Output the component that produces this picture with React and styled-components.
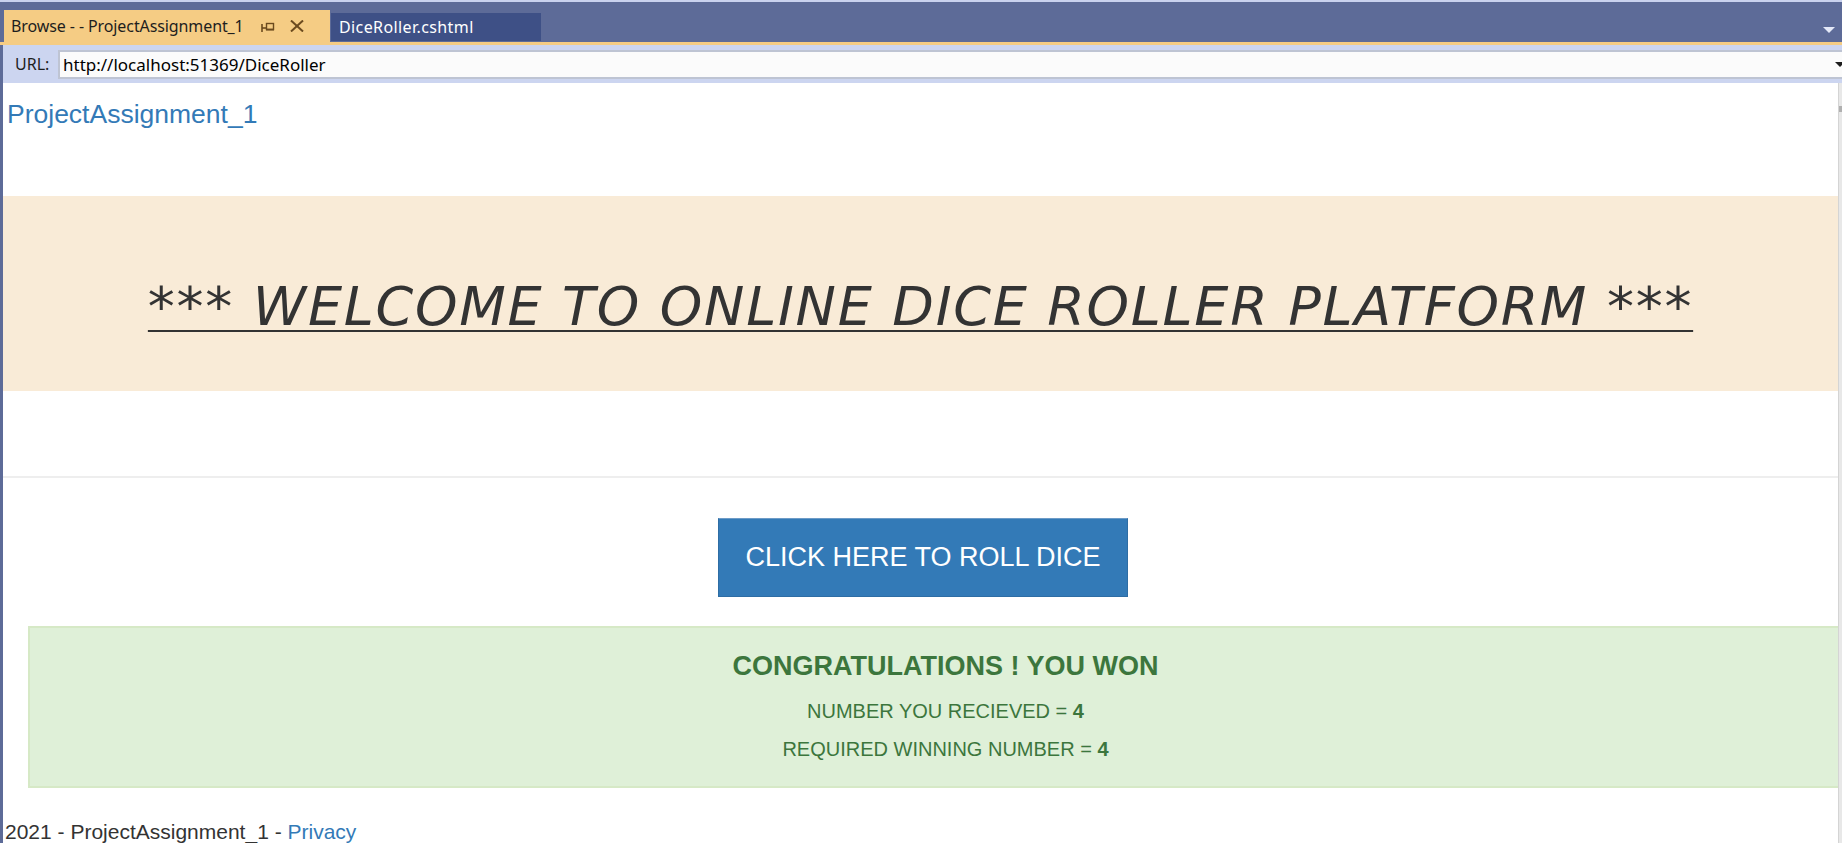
import React from 'react';
import styled, { createGlobalStyle } from 'styled-components';

const GlobalStyle = createGlobalStyle`
  html, body {
    margin: 0;
    padding: 0;
    overflow: hidden;
  }
  * {
    box-sizing: border-box;
  }
`;

const PinIcon = () => (
  <svg width="14" height="11" viewBox="0 0 14 11" fill="none" stroke="#6b4a1e">
    <line x1="1" y1="2" x2="1" y2="10" strokeWidth="1.6" />
    <line x1="1" y1="6" x2="5" y2="6" strokeWidth="1.6" />
    <rect x="5.5" y="1.5" width="7" height="6" strokeWidth="1.4" />
    <line x1="5" y1="7.6" x2="13" y2="7.6" strokeWidth="1.8" />
  </svg>
);

const CloseIcon = () => (
  <svg width="14" height="12" viewBox="0 0 14 12" stroke="#6b4a1e" strokeWidth="2">
    <line x1="1" y1="0.5" x2="13" y2="11.5" />
    <line x1="13" y1="0.5" x2="1" y2="11.5" />
  </svg>
);

const App = () => {
  return (
    <>
      <GlobalStyle />
      <Window>
        <TitleBar>
          <Tabs>
            <Tab $active>
              <TabLabel $active>Browse - - ProjectAssignment_1</TabLabel>
              <TabIcons>
                <PinIcon />
                <CloseIcon />
              </TabIcons>
            </Tab>
            <Tab>
              <TabLabel>DiceRoller.cshtml</TabLabel>
            </Tab>
          </Tabs>
          <MenuArrow />
        </TitleBar>
        <AccentLine />
        <UrlBar>
          <UrlLabel>URL:</UrlLabel>
          <UrlInput>
            <span>http://localhost:51369/DiceRoller</span>
            <InputArrow />
          </UrlInput>
        </UrlBar>
        <Viewport>
          <Page>
            <Navbar>
              <Brand href="#">ProjectAssignment_1</Brand>
            </Navbar>
            <Jumbotron>
              <Welcome>*** WELCOME TO ONLINE DICE ROLLER PLATFORM ***</Welcome>
            </Jumbotron>
            <Rule />
            <ButtonRow>
              <RollButton>CLICK HERE TO ROLL DICE</RollButton>
            </ButtonRow>
            <Alert>
              <AlertTitle>CONGRATULATIONS ! YOU WON</AlertTitle>
              <AlertLine>
                NUMBER YOU RECIEVED = <b>4</b>
              </AlertLine>
              <AlertLine $last>
                REQUIRED WINNING NUMBER = <b>4</b>
              </AlertLine>
            </Alert>
            <Footer>
              2021 - ProjectAssignment_1 - <FooterLink href="#">Privacy</FooterLink>
            </Footer>
          </Page>
          <Scrollbar>
            <ScrollThumb />
          </Scrollbar>
        </Viewport>
      </Window>
    </>
  );
};

export default App;

const Window = styled.div`
  width: 1842px;
  height: 843px;
  display: flex;
  flex-direction: column;
  background: #5d6b98;
  overflow: hidden;
`;

const TitleBar = styled.div`
  height: 42px;
  flex: none;
  display: flex;
  align-items: flex-end;
  justify-content: space-between;
  border-top: 2px solid #c9d2ee;
  padding-left: 4px;
  padding-right: 7px;
`;

const Tabs = styled.div`
  display: flex;
  align-items: flex-end;
  gap: 1px;
`;

const Tab = styled.div`
  display: flex;
  align-items: center;
  height: ${p => (p.$active ? '32px' : '28px')};
  margin-bottom: ${p => (p.$active ? '0' : '1px')};
  width: ${p => (p.$active ? '326px' : '210px')};
  padding-left: ${p => (p.$active ? '7px' : '8px')};
  background: ${p => (p.$active ? '#f5cc84' : '#3e5086')};
`;

const TabLabel = styled.span`
  font-family: 'Noto Sans', 'Open Sans', sans-serif;
  font-size: 16px;
  color: ${p => (p.$active ? '#1e1e1e' : '#ffffff')};
  white-space: nowrap;
  letter-spacing: ${p => (p.$active ? '-0.1px' : '0.4px')};
`;

const TabIcons = styled.div`
  display: flex;
  align-items: center;
  gap: 15px;
  margin-left: 17px;
  svg:first-child {
    margin-top: 2px;
  }
`;

const MenuArrow = styled.div`
  width: 0;
  height: 0;
  margin-bottom: 9px;
  border-left: 6px solid transparent;
  border-right: 6px solid transparent;
  border-top: 6px solid #e4e9f8;
`;

const AccentLine = styled.div`
  height: 3px;
  flex: none;
  background: #f5cc84;
`;

const UrlBar = styled.div`
  height: 38px;
  flex: none;
  margin-left: 3px;
  display: flex;
  align-items: center;
  background: #ccd5f0;
  padding-left: 12px;
`;

const UrlLabel = styled.span`
  font-family: 'Noto Sans', 'Open Sans', sans-serif;
  font-size: 16px;
  color: #1e1e1e;
  width: 43px;
  flex: none;
`;

const UrlInput = styled.div`
  flex: 1;
  height: 29px;
  margin-top: 1px;
  display: flex;
  align-items: center;
  justify-content: space-between;
  background: #fbfbfb;
  border: 2px solid #bec4d3;
  border-right: none;
  padding-left: 3px;
  font-family: 'Noto Sans', 'Open Sans', sans-serif;
  font-size: 17px;
  color: #000;
`;

const InputArrow = styled.div`
  width: 0;
  height: 0;
  margin-right: -3px;
  border-left: 5px solid transparent;
  border-right: 5px solid transparent;
  border-top: 5px solid #1e1e1e;
`;

const Viewport = styled.div`
  flex: 1;
  min-height: 0;
  margin-left: 3px;
  display: flex;
  background: #ffffff;
`;

const Page = styled.div`
  flex: 1;
  min-width: 0;
  overflow: hidden;
  font-family: 'Liberation Sans', Arial, sans-serif;
  font-size: 21px;
  line-height: 30px;
  color: #333333;
`;

const Scrollbar = styled.div`
  width: 4px;
  flex: none;
  background: #e8e8e8;
  border-left: 1px solid #d4d4d4;
  padding-top: 23px;
`;

const ScrollThumb = styled.div`
  height: 6px;
  background: #b0b0b0;
`;

const Navbar = styled.div`
  padding: 16px 0 0 4px;
  height: 113px;
`;

const Brand = styled.a`
  font-size: 26.5px;
  line-height: 30px;
  color: #337ab7;
  text-decoration: none;
`;

const Jumbotron = styled.div`
  height: 195px;
  background: #f9ebd7;
  padding-top: 81px;
  text-align: center;
`;

const Welcome = styled.h1`
  margin: 0;
  font-family: 'DejaVu Sans', Verdana, sans-serif;
  font-style: italic;
  font-weight: normal;
  font-size: 54px;
  line-height: 59px;
  letter-spacing: 1.7px;
  color: #333333;
  text-decoration: underline;
  text-decoration-thickness: 2px;
  text-underline-offset: 5px;
  white-space: nowrap;
`;

const Rule = styled.hr`
  margin: 85px 0 0;
  border: none;
  border-top: 2px solid #eeeeee;
`;

const ButtonRow = styled.div`
  display: flex;
  justify-content: center;
  padding-top: 40px;
  padding-left: 5px;
`;

const RollButton = styled.button`
  width: 410px;
  height: 79px;
  padding: 0;
  background: #337ab7;
  border: 1px solid #2e6da4;
  border-top-color: #6d9bc7;
  color: #ffffff;
  font-family: 'Liberation Sans', Arial, sans-serif;
  font-size: 27px;
  cursor: pointer;
`;

const Alert = styled.div`
  width: 100%;
  margin: 29px 0 0 25px;
  padding: 23px 0 22px;
  background: #dff0d8;
  border: 2px solid #d6e9c6;
  color: #3c763d;
  text-align: center;
`;

const AlertTitle = styled.h4`
  margin: 0 0 15px;
  font-size: 27px;
  line-height: 30px;
  font-weight: bold;
`;

const AlertLine = styled.p`
  margin: 0 0 ${p => (p.$last ? '0' : '8px')};
  font-size: 20px;
  line-height: 30px;
`;

const Footer = styled.footer`
  margin-top: 29px;
  padding-left: 2px;
  white-space: nowrap;
`;

const FooterLink = styled.a`
  color: #337ab7;
  text-decoration: none;
`;
